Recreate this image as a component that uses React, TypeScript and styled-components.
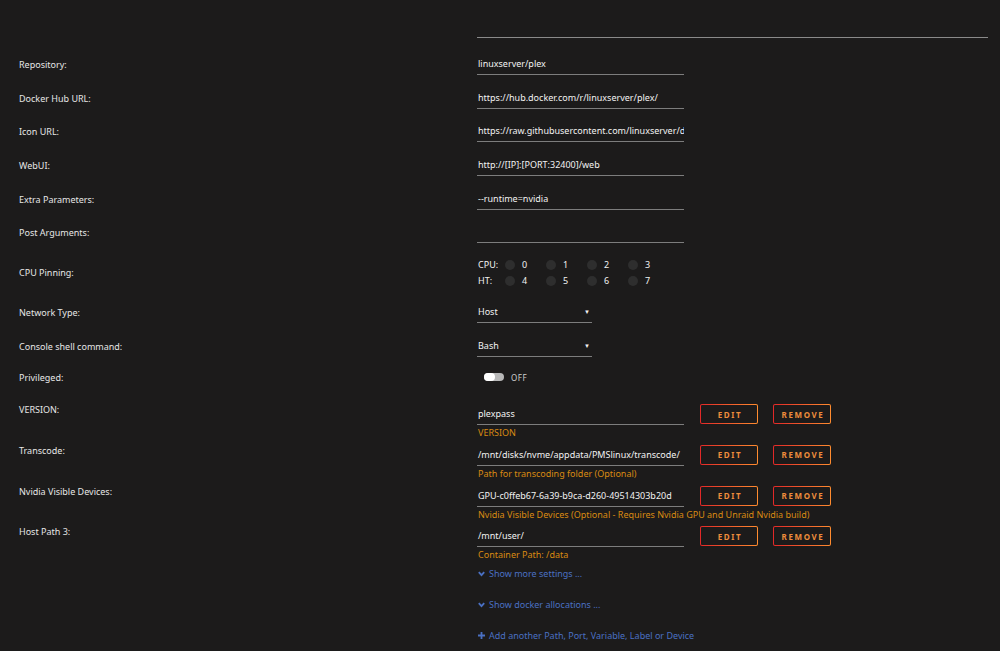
import React from 'react';
import styled, {createGlobalStyle} from "styled-components";

const Global = createGlobalStyle`
  html, body {
    margin: 0;
    padding: 0;
    background: #1c1b1b;
  }
  body {
    font-family: "Noto Sans", "Open Sans", sans-serif;
    font-size: 9px;
    color: #f2f2f2;
  }
`;

const Page = styled.main`
  width: 1000px;
  height: 651px;
  overflow: hidden;
  padding-top: 37px;
  box-sizing: border-box;
`;

const TopRule = styled.div`
  margin-left: 477px;
  margin-right: 12px;
  border-bottom: 1px solid #8a8a8a;
  margin-bottom: 10px;
`;

const Row = styled.div<{ $h: number; $top?: boolean }>`
  display: flex;
  align-items: ${p => p.$top ? "flex-start" : "center"};
  height: ${p => p.$h}px;
`;

const Label = styled.div`
  width: 477px;
  padding-left: 19px;
  box-sizing: border-box;
  flex-shrink: 0;
  color: #e6e6e6;
  line-height: 11px;
`;

const Value = styled.div`
  display: flex;
  flex-direction: column;
`;

const Input = styled.div<{ $w?: number }>`
  width: ${p => p.$w || 207}px;
  height: 21px;
  box-sizing: border-box;
  border-bottom: 1px solid #7d7d7d;
  line-height: 20px;
  padding-left: 1px;
  white-space: nowrap;
  overflow: hidden;
  color: #f2f2f2;
`;

const Select = styled(Input)`
  display: flex;
  justify-content: space-between;
  padding-right: 2px;

  &::after {
    content: "▼";
    font-size: 6px;
    color: #f2f2f2;
  }
`;

const PinGrid = styled.div`
  display: grid;
  grid-template-columns: 27px repeat(4, 41px);
  row-gap: 5px;
  align-items: center;
  padding-left: 1px;
`;

const PinLabel = styled.span`
  line-height: 11px;
`;

const Pin = styled.span`
  display: flex;
  align-items: center;
  gap: 7px;
  line-height: 11px;

  &::before {
    content: "";
    width: 10px;
    height: 10px;
    border-radius: 50%;
    background: #2e2e2e;
  }
`;

const Switch = styled.div`
  display: flex;
  align-items: center;
  gap: 7px;
  margin-left: 7px;
  font-size: 8px;
  color: #cfcfcf;
  letter-spacing: 0.5px;
`;

const Track = styled.span`
  width: 20px;
  height: 8px;
  border-radius: 4px;
  background: #b8b8b8;
  position: relative;

  &::before {
    content: "";
    position: absolute;
    left: 0;
    top: 0;
    width: 11px;
    height: 8px;
    border-radius: 4px;
    background: #ffffff;
  }
`;

const ConfigLine = styled.div`
  display: flex;
  align-items: flex-start;
`;

const Button = styled.button`
  width: 58px;
  height: 20px;
  margin-left: 16px;
  padding: 0 0 0 2px;
  border: 1.5px solid transparent;
  border-radius: 2px;
  background: linear-gradient(#1c1b1b, #1c1b1b) padding-box,
  linear-gradient(90deg, #e22828, #ff8c2f) border-box;
  color: #ee8d3c;
  font-family: "Noto Sans", sans-serif;
  font-size: 8px;
  font-weight: 700;
  letter-spacing: 1.6px;

  & + & {
    margin-left: 15px;
  }
`;

const Hint = styled.div`
  color: #d98a12;
  line-height: 12px;
  height: 12px;
  margin-top: 2px;
  padding-left: 1px;
  white-space: nowrap;
`;

const Links = styled.div`
  margin-left: 478px;
  display: flex;
  flex-direction: column;
  gap: 17px;
`;

const Link = styled.a`
  display: flex;
  align-items: center;
  gap: 4px;
  height: 14px;
  color: #4a70c2;
  text-decoration: none;
  cursor: pointer;

  svg {
    flex-shrink: 0;
  }
`;

const Chevron = () => (
    <svg width="7" height="6" viewBox="0 0 7 6">
        <path d="M0.8 1.2 L3.5 4.2 L6.2 1.2" fill="none" stroke="#4a70c2" strokeWidth="1.8"/>
    </svg>
);

const Plus = () => (
    <svg width="7" height="7" viewBox="0 0 7 7">
        <path d="M3.5 0 V7 M0 3.5 H7" stroke="#4a70c2" strokeWidth="1.8"/>
    </svg>
);

const fields = [
    {label: "Repository:", value: "linuxserver/plex"},
    {label: "Docker Hub URL:", value: "https://hub.docker.com/r/linuxserver/plex/"},
    {label: "Icon URL:", value: "https://raw.githubusercontent.com/linuxserver/docker-templates/master/linuxserver.io/img/plex-icon.png"},
    {label: "WebUI:", value: "http://[IP]:[PORT:32400]/web"},
    {label: "Extra Parameters:", value: "--runtime=nvidia"},
    {label: "Post Arguments:", value: ""},
];

const configs = [
    {label: "VERSION:", value: "plexpass", hint: "VERSION"},
    {label: "Transcode:", value: "/mnt/disks/nvme/appdata/PMSlinux/transcode/", hint: "Path for transcoding folder (Optional)"},
    {label: "Nvidia Visible Devices:", value: "GPU-c0ffeb67-6a39-b9ca-d260-49514303b20d", hint: "Nvidia Visible Devices (Optional - Requires Nvidia GPU and Unraid Nvidia build)"},
    {label: "Host Path 3:", value: "/mnt/user/", hint: "Container Path: /data"},
];

export default function App() {
    return <Page>
        <Global/>
        <TopRule/>
        {fields.map(f => (
            <Row key={f.label} $h={33.6}>
                <Label>{f.label}</Label>
                <Input>{f.value}</Input>
            </Row>
        ))}
        <Row $h={46.4}>
            <Label>CPU Pinning:</Label>
            <PinGrid>
                <PinLabel>CPU:</PinLabel>
                {[0, 1, 2, 3].map(n => <Pin key={n}>{n}</Pin>)}
                <PinLabel>HT:</PinLabel>
                {[4, 5, 6, 7].map(n => <Pin key={n}>{n}</Pin>)}
            </PinGrid>
        </Row>
        <Row $h={33.6}>
            <Label>Network Type:</Label>
            <Select $w={115}>Host</Select>
        </Row>
        <Row $h={33.6}>
            <Label>Console shell command:</Label>
            <Select $w={115}>Bash</Select>
        </Row>
        <Row $h={28}>
            <Label>Privileged:</Label>
            <Switch><Track/>OFF</Switch>
        </Row>
        <div style={{height: 13}}/>
        {configs.map(c => (
            <Row key={c.label} $h={40.7} $top>
                <Label>{c.label}</Label>
                <Value>
                    <ConfigLine>
                        <Input>{c.value}</Input>
                        <Button>EDIT</Button>
                        <Button>REMOVE</Button>
                    </ConfigLine>
                    <Hint>{c.hint}</Hint>
                </Value>
            </Row>
        ))}
        <Links>
            <Link><Chevron/>Show more settings ...</Link>
            <Link><Chevron/>Show docker allocations ...</Link>
            <Link><Plus/>Add another Path, Port, Variable, Label or Device</Link>
        </Links>
    </Page>;
}
